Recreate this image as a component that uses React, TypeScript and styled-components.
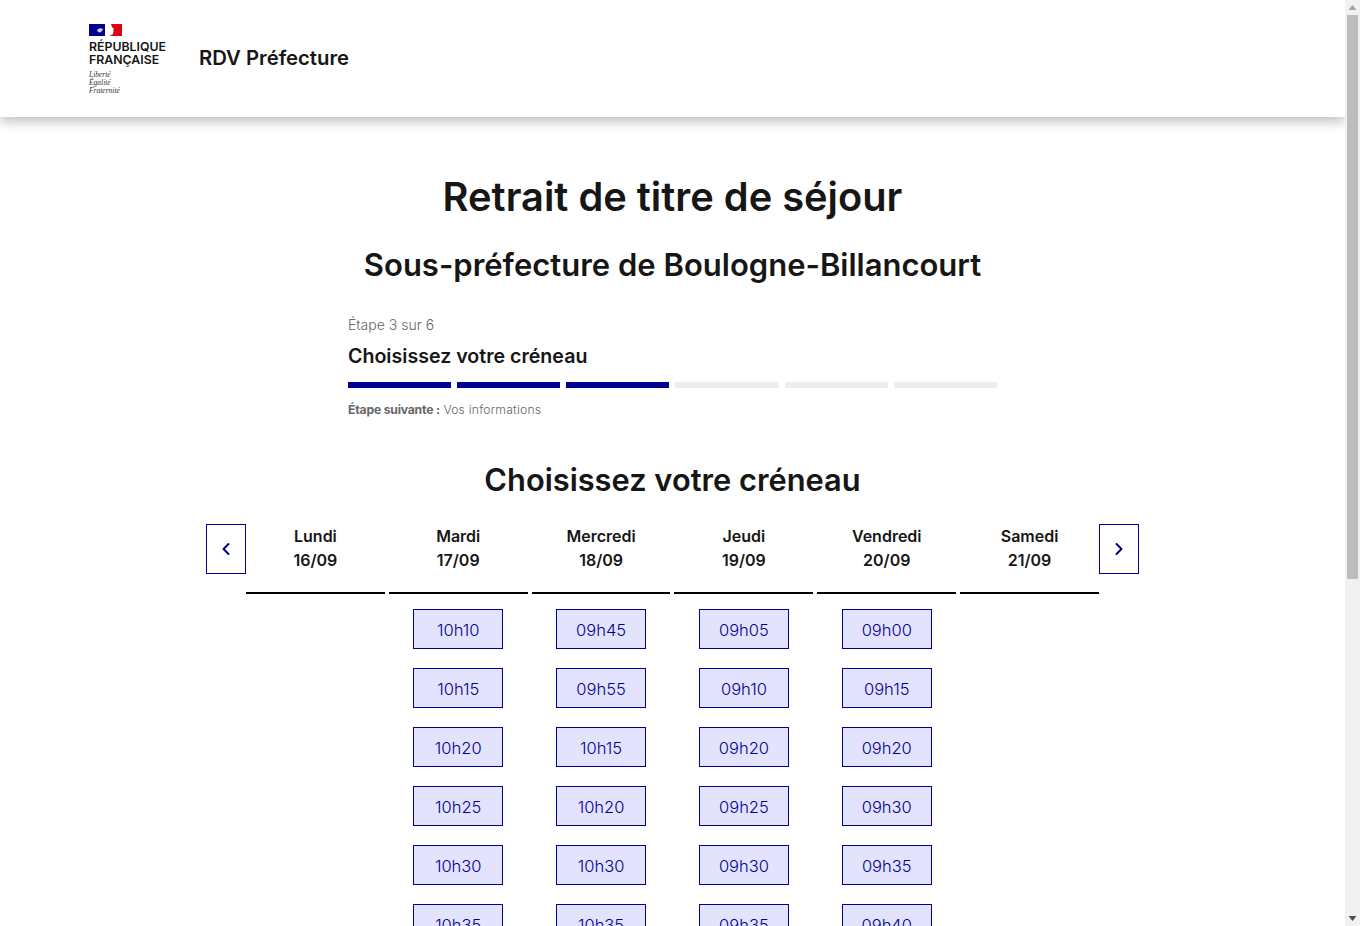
import React from 'react';
import styled, { createGlobalStyle } from 'styled-components';
import { ChevronLeft, ChevronRight } from 'lucide-react';

type Day = {
  name: string;
  date: string;
  slots: string[];
};

const days: Day[] = [
  { name: 'Lundi', date: '16/09', slots: [] },
  {
    name: 'Mardi',
    date: '17/09',
    slots: ['10h10', '10h15', '10h20', '10h25', '10h30', '10h35', '10h40', '10h45', '10h50', '10h55'],
  },
  {
    name: 'Mercredi',
    date: '18/09',
    slots: ['09h45', '09h55', '10h15', '10h20', '10h30', '10h35', '10h40', '10h45', '10h50', '10h55'],
  },
  {
    name: 'Jeudi',
    date: '19/09',
    slots: ['09h05', '09h10', '09h20', '09h25', '09h30', '09h35', '09h40', '09h45', '09h50', '09h55'],
  },
  {
    name: 'Vendredi',
    date: '20/09',
    slots: ['09h00', '09h15', '09h20', '09h30', '09h35', '09h40', '09h45', '09h50', '09h55', '10h00'],
  },
  { name: 'Samedi', date: '21/09', slots: [] },
];

const steps = [true, true, true, false, false, false];

export default function App(): JSX.Element {
  return (
    <>
      <GlobalStyle />
      <Header>
        <Brand>
          <Flag viewBox="0 0 33 12" aria-hidden="true">
            <rect width="16" height="12" fill="#000091" />
            <path d="M8 6c2-2 4-2 6-1l-1 2c-1 1-2 2-4 1z" fill="#fff" opacity="0.8" />
            <path d="M22 0H33V12H20C23 11 25 10 24 8L25 7 24 6 25 5 23 3Z" fill="#e1000f" />
          </Flag>
          <BrandName>
            RÉPUBLIQUE
            <br />
            FRANÇAISE
          </BrandName>
          <Motto>
            Liberté
            <br />
            Égalité
            <br />
            Fraternité
          </Motto>
        </Brand>
        <ServiceName>RDV Préfecture</ServiceName>
      </Header>
      <Main>
        <Title>Retrait de titre de séjour</Title>
        <Subtitle>Sous-préfecture de Boulogne-Billancourt</Subtitle>
        <Stepper>
          <StepCount>Étape 3 sur 6</StepCount>
          <StepTitle>Choisissez votre créneau</StepTitle>
          <StepBar>
            {steps.map((done, i) => (
              <StepSegment key={i} $done={done} />
            ))}
          </StepBar>
          <NextStep>
            <b>Étape suivante :</b> Vos informations
          </NextStep>
        </Stepper>
        <SectionTitle>Choisissez votre créneau</SectionTitle>
        <Calendar>
          <NavButton aria-label="Précédent">
            <ChevronLeft size={20} strokeWidth={2.4} />
          </NavButton>
          <Columns>
            {days.map((day) => (
              <Column key={day.date}>
                <DayHead>
                  {day.name}
                  <br />
                  {day.date}
                </DayHead>
                {day.slots.map((slot) => (
                  <Slot key={slot}>{slot}</Slot>
                ))}
              </Column>
            ))}
          </Columns>
          <NavButton aria-label="Suivant">
            <ChevronRight size={20} strokeWidth={2.4} />
          </NavButton>
        </Calendar>
      </Main>
      <ScrollTrack aria-hidden="true">
        <ScrollArrow viewBox="0 0 15 15">
          <path d="M3.5 10h8l-4-5z" fill="#a3a3a3" />
        </ScrollArrow>
        <ScrollThumb />
        <ScrollArrow viewBox="0 0 15 15">
          <path d="M3.5 5h8l-4 5z" fill="#505050" />
        </ScrollArrow>
      </ScrollTrack>
    </>
  );
}

const GlobalStyle = createGlobalStyle`
  body {
    margin: 0;
    padding-right: 15px;
    background: #fff;
    color: #161616;
    font-family: Inter, "Noto Sans", sans-serif;
  }
`;

const ScrollTrack = styled.div`
  position: fixed;
  top: 0;
  right: 0;
  width: 15px;
  height: 100vh;
  display: flex;
  flex-direction: column;
  justify-content: space-between;
  background: #f1f1f1;
`;

const ScrollArrow = styled.svg`
  width: 15px;
  height: 15px;
  flex: none;
`;

const ScrollThumb = styled.div`
  width: 11px;
  height: 564px;
  margin: 0 2px auto;
  background: #bdbdbd;
`;

const Header = styled.header`
  height: 117px;
  display: flex;
  align-items: center;
  padding-left: 89px;
  background: #fff;
  box-shadow: 0 4px 12px rgba(0, 0, 18, 0.28);
`;

const Brand = styled.div`
  width: 110px;
  padding-top: 1px;
  display: flex;
  flex-direction: column;
`;

const Flag = styled.svg`
  width: 33px;
  height: 12px;
  display: block;
`;

const BrandName = styled.div`
  margin-top: 4px;
  font-size: 12.3px;
  line-height: 13px;
  font-weight: 600;
`;

const Motto = styled.div`
  margin-top: 5px;
  font-family: "Liberation Serif", serif;
  font-style: italic;
  font-size: 7.5px;
  line-height: 8px;
  color: #333;
`;

const ServiceName = styled.div`
  padding-bottom: 2px;
  font-size: 20.3px;
  font-weight: 600;
`;

const Main = styled.main`
  padding: 52px 0 120px;
  display: flex;
  flex-direction: column;
  align-items: center;
`;

const Title = styled.h1`
  margin: 0;
  font-size: 39.8px;
  line-height: 56px;
  font-weight: 600;
`;

const Subtitle = styled.h2`
  margin: 18px 0 0;
  font-size: 31px;
  line-height: 44px;
  font-weight: 600;
`;

const Stepper = styled.div`
  width: 649px;
  margin-top: 26px;
`;

const StepCount = styled.div`
  font-size: 14px;
  line-height: 24px;
  font-weight: 300;
  color: #666;
`;

const StepTitle = styled.div`
  margin-top: 5px;
  font-size: 19.6px;
  line-height: 28px;
  font-weight: 600;
`;

const StepBar = styled.div`
  margin-top: 12px;
  display: grid;
  grid-template-columns: repeat(6, 1fr);
  gap: 6px;
`;

const StepSegment = styled.div<{ $done: boolean }>`
  height: 6px;
  background: ${(p) => (p.$done ? '#000091' : '#eeeeee')};
`;

const NextStep = styled.div`
  margin-top: 12px;
  font-size: 12.2px;
  line-height: 20px;
  font-weight: 300;
  letter-spacing: 0.2px;
  color: #666;

  b {
    font-weight: 700;
    letter-spacing: -0.2px;
  }
`;

const SectionTitle = styled.h3`
  margin: 38px 0 0;
  font-size: 30.8px;
  line-height: 44px;
  font-weight: 600;
`;

const Calendar = styled.div`
  width: 933px;
  margin-top: 22px;
  display: flex;
  align-items: flex-start;
`;

const NavButton = styled.button`
  flex: none;
  width: 40px;
  height: 50px;
  padding: 0;
  display: flex;
  align-items: center;
  justify-content: center;
  background: #fff;
  border: 1px solid #000091;
  color: #000091;
`;

const Columns = styled.div`
  flex: 1;
  display: grid;
  grid-template-columns: repeat(6, 1fr);
  column-gap: 4px;
`;

const Column = styled.div`
  display: flex;
  flex-direction: column;
  align-items: center;
`;

const DayHead = styled.div`
  width: 100%;
  height: 68px;
  margin-bottom: 15px;
  border-bottom: 2px solid #000;
  text-align: center;
  font-size: 16px;
  line-height: 24px;
  font-weight: 600;
`;

const Slot = styled.button`
  width: 90px;
  height: 40px;
  margin-bottom: 19px;
  padding: 2px 0 0;
  background: #e3e3fd;
  border: 1px solid #000091;
  color: #000091;
  font-family: inherit;
  font-size: 16.5px;
  font-weight: 300;
`;
